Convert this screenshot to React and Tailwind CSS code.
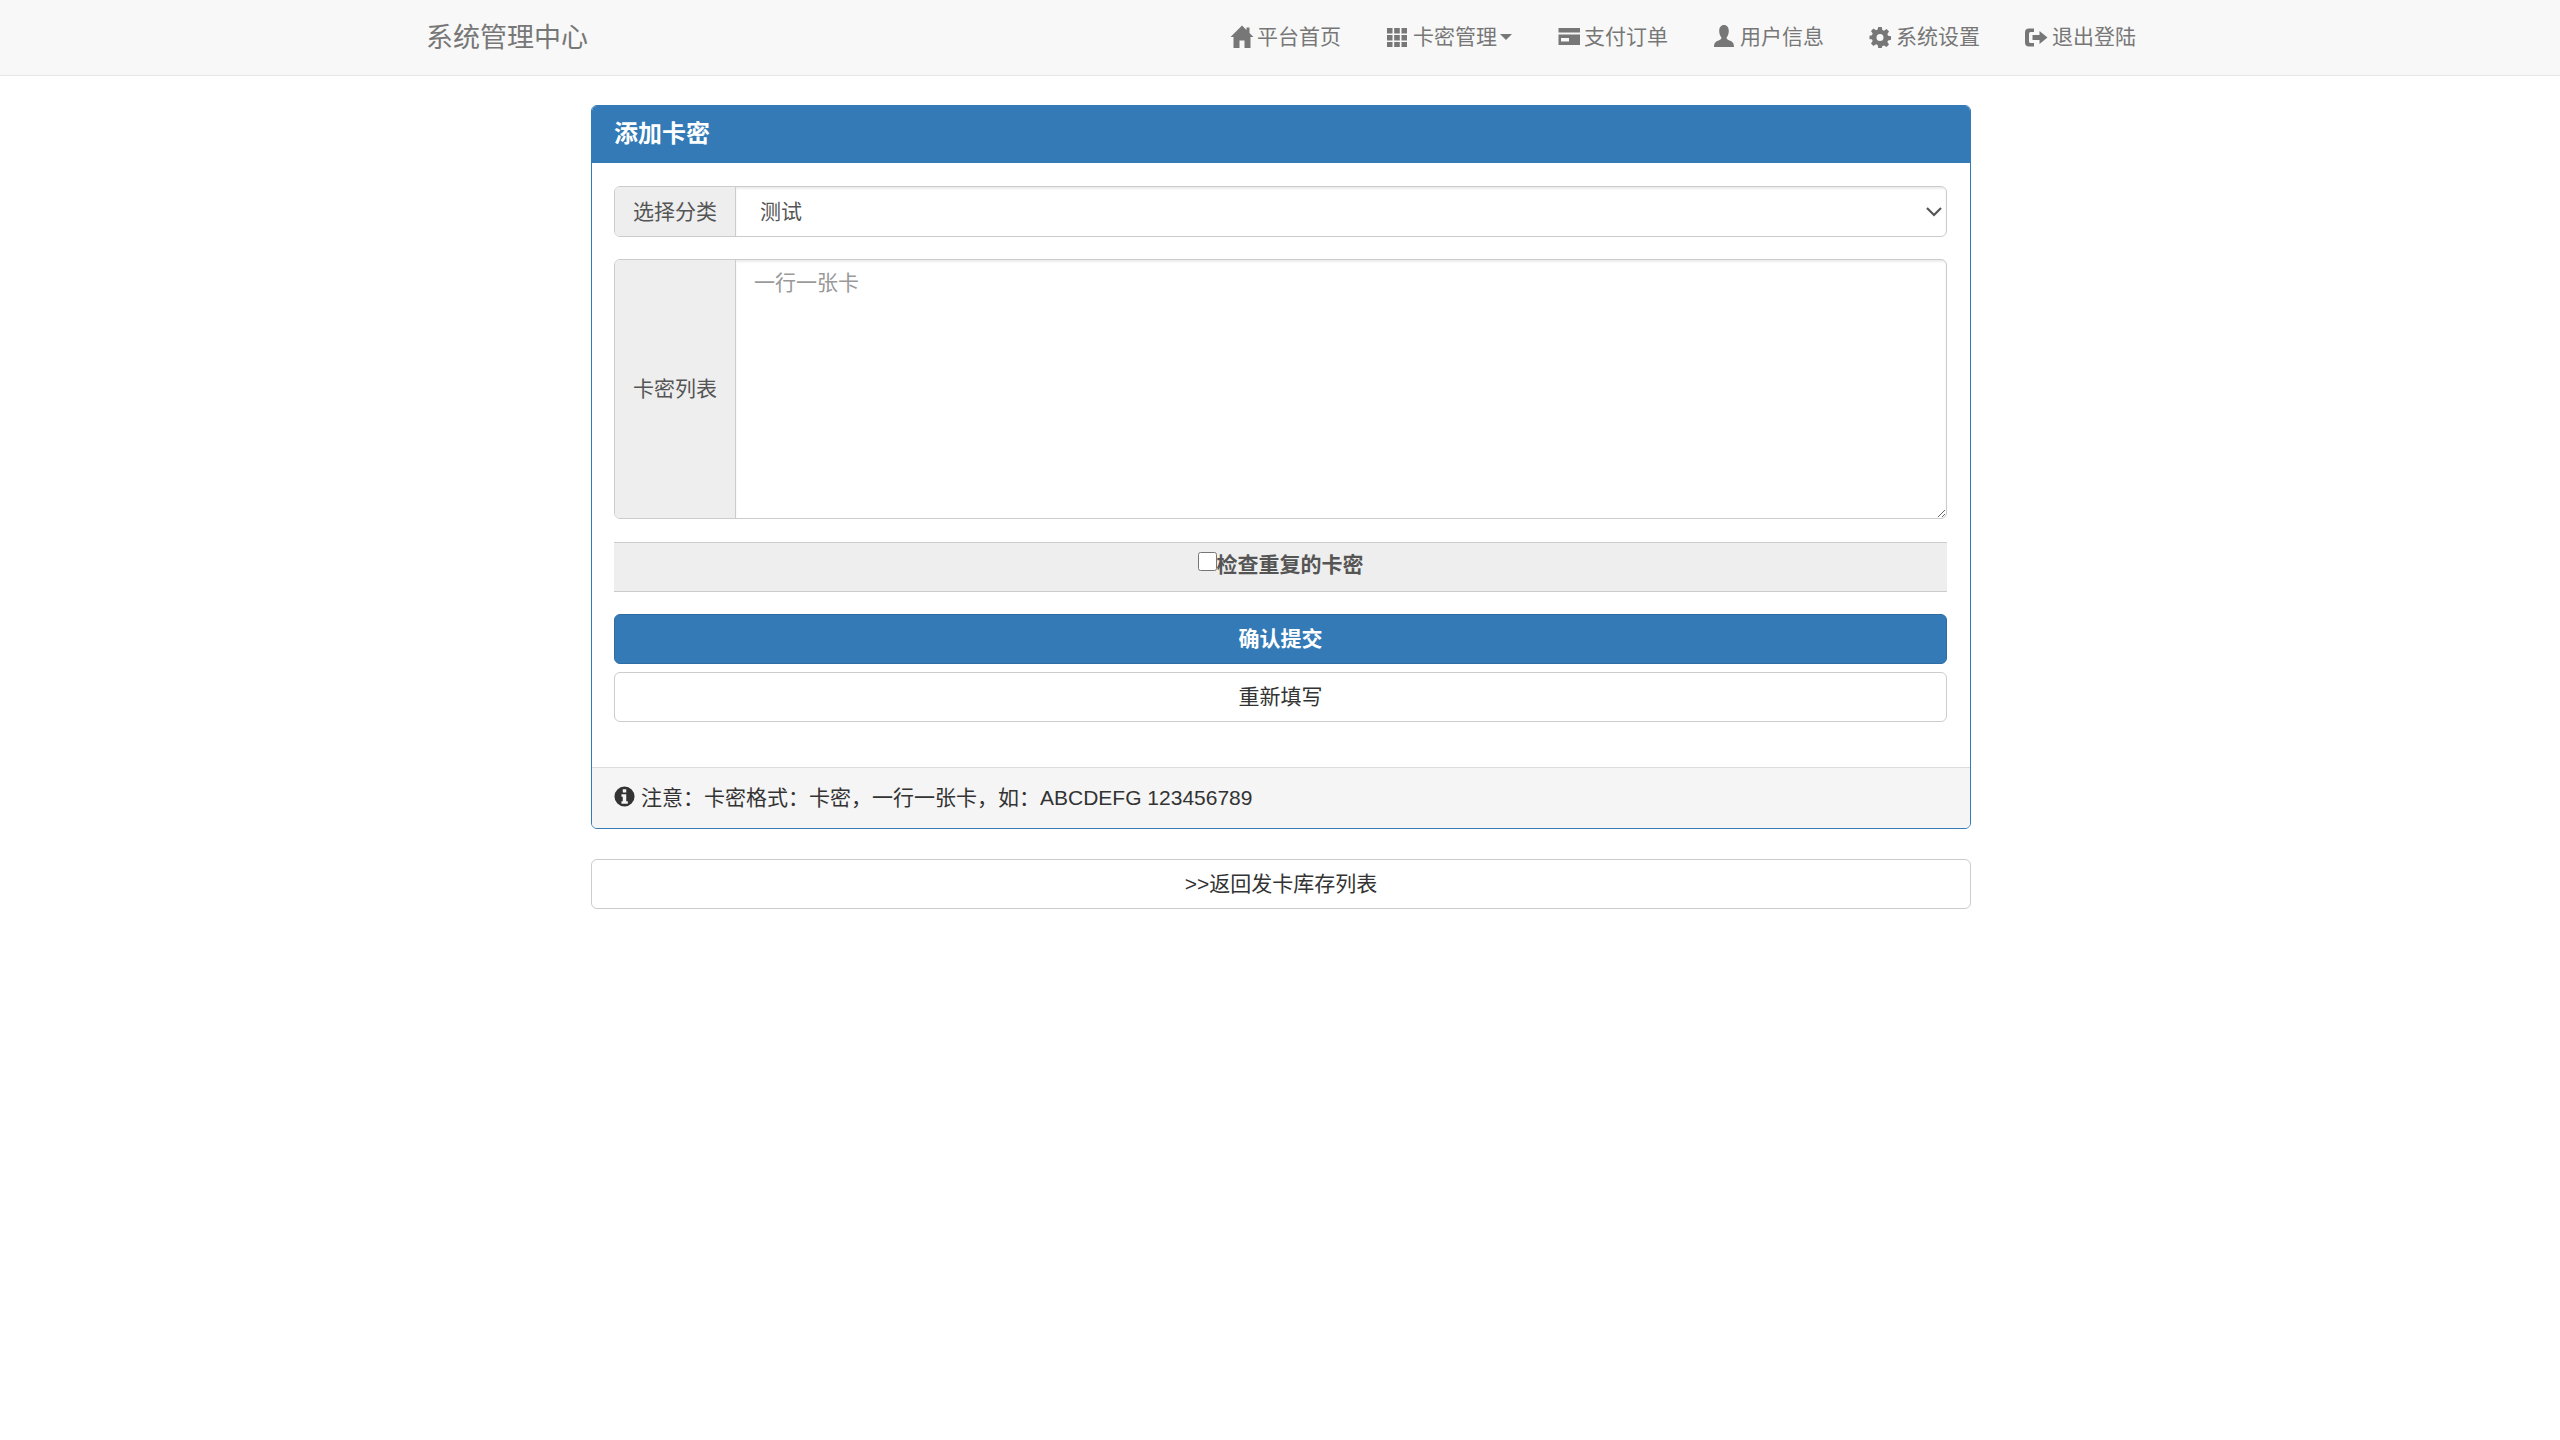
import React from "react";

function Glyph({ children, className = "" }) {
  return (
    <svg viewBox="0 0 24 24" fill="currentColor" className={"w-[24px] h-[24px] shrink-0 " + className}>
      {children}
    </svg>
  );
}

const HomeIcon = () => (
  <Glyph>
    <path d="M12 .5 L.5 12 H3.500 V23 H9.500 V15.500 H14.500 V23 H20.500 V12 H23.500 L19.500 8 V2.500 H16.500 V5 Z" />
  </Glyph>
);

const ThIcon = () => (
  <Glyph className="-ml-[1px] mr-[1px]">
    <path d="M2 3h5.500v5.500H2zM9.200 3h5.600v5.500H9.200zM16.500 3H22v5.500h-5.500zM2 10h5.500v5.500H2zM9.200 10h5.600v5.500H9.200zM16.500 10H22v5.500h-5.500zM2 17h5.500v5H2zM9.200 17h5.600v5H9.200zM16.500 17H22v5h-5.500z" />
  </Glyph>
);

const CardIcon = () => (
  <Glyph>
    <path fillRule="evenodd" d="M1.500 3h21.500v17H1.500zM1.500 7.500v2h21.500v-2zM4 13v3.500h8V13z" />
  </Glyph>
);

const UserIcon = () => (
  <Glyph className="-ml-[1px] mr-[1px]">
    <path d="M12 0c3 0 4.800 2.400 4.800 6 0 3-1 5-2.200 6.400 0 1.400.6 2 2.400 2.800 2.600 1 5 2 5 6.800H2c0-4.800 2.400-5.800 5-6.800 1.800-.8 2.400-1.400 2.400-2.800C8.200 11 7.200 9 7.200 6c0-3.600 1.800-6 4.800-6z" />
  </Glyph>
);

const CogIcon = () => (
  <Glyph className="-ml-[1px] mr-[1px]">
    <path
      transform="translate(1.500 2) scale(.875)"
      fillRule="evenodd"
      d="M10 0h4l.7 3.400 1.900.8 2.900-1.900 2.800 2.800-1.900 2.900.8 1.900 3.400.7v4l-3.400.7-.8 1.900 1.900 2.900-2.800 2.800-2.900-1.900-1.900.8L14 24h-4l-.7-3.400-1.900-.8-2.900 1.900-2.800-2.800 1.900-2.900-.8-1.900L0 14v-4l2.800-.7.8-1.900-1.900-2.900 2.800-2.800 2.900 1.900 1.900-.8zM12 8a4 4 0 1 0 0 8 4 4 0 0 0 0-8z"
    />
  </Glyph>
);

const LogoutIcon = () => (
  <Glyph className="-ml-[1px] mr-[1px]">
    <path d="M10 3.500H5a4 4 0 0 0-4 4v10a4 4 0 0 0 4 4h5v-3.500H6.500A1.500 1.500 0 0 1 5 16.500v-8A1.500 1.500 0 0 1 6.500 7H10z" />
    <path d="M15.500 6l8 6.500-8 6.500v-4H8.500v-5h7z" />
  </Glyph>
);

const InfoIcon = () => (
  <svg viewBox="0 0 24 24" fill="currentColor" className="w-[21px] h-[21px] shrink-0 mb-[2px]">
    <path fillRule="evenodd" d="M12 .500a11.500 11.500 0 1 0 0 23 11.500 11.500 0 0 0 0-23zM10 3.800h4v3.500h-4zM8.500 9.500H14v8h1.800v2.700H8.500v-2.700H10v-5.300H8.500z" />
  </svg>
);

const navItems = [
  { icon: <HomeIcon />, label: "平台首页" },
  { icon: <ThIcon />, label: "卡密管理", caret: true },
  { icon: <CardIcon />, label: "支付订单" },
  { icon: <UserIcon />, label: "用户信息" },
  { icon: <CogIcon />, label: "系统设置" },
  { icon: <LogoutIcon />, label: "退出登陆" },
];

export default function App() {
  return (
    <div className="min-h-[1440px] bg-white text-[21px] text-[#333] font-['Liberation_Sans','Noto_Sans_CJK_SC',sans-serif]">
      <nav className="h-[76px] pl-[3px] bg-[#f8f8f8] border-b border-[#e7e7e7]">
        <div className="w-[1755px] mx-auto px-[22px] h-full flex items-center justify-between">
          <a className="text-[27px] text-[#777] mt-[2px]">系统管理中心</a>
          <ul className="flex gap-[45px] pr-[1px] pb-[2px] text-[#777]">
            {navItems.map((item) => (
              <li key={item.label} className="flex items-center gap-[3px]">
                {item.icon}
                <span className="flex items-center">
                  {item.label}
                  {item.caret && (
                    <span className="ml-[3px] border-x-[6px] border-t-[6px] border-x-transparent border-t-[#777]"></span>
                  )}
                </span>
              </li>
            ))}
          </ul>
        </div>
      </nav>

      <div className="pl-[2px]">
        <div className="w-[1380px] mx-auto mt-[29px]">
          <div className="border border-[#337ab7] rounded-[6px] overflow-hidden">
            <div className="h-[57px] pb-[2px] bg-[#337ab7] text-white font-bold text-[24px] px-[22px] flex items-center">添加卡密</div>
            <div className="pl-[22px] pr-[23px] pt-[23px] pb-[45px]">
              <div className="flex h-[51px] border border-[#ccc] rounded-[6px] overflow-hidden">
                <span className="w-[121px] shrink-0 bg-[#eee] border-r border-[#ccc] text-[#555] flex items-center justify-center">选择分类</span>
                <div className="flex-1 flex items-center justify-between pl-[24px] pr-[4px] text-[#555] shadow-[inset_0_2px_2px_rgba(0,0,0,0.075)]">
                  <span>测试</span>
                  <svg viewBox="0 0 16 16" className="w-[16px] h-[16px]" fill="none" stroke="#555" strokeWidth="2.200">
                    <path d="M1 4l7 7 7-7" />
                  </svg>
                </div>
              </div>

              <div className="flex h-[260px] mt-[22px] border border-[#ccc] rounded-[6px] overflow-hidden">
                <span className="w-[121px] shrink-0 bg-[#eee] border-r border-[#ccc] text-[#555] flex items-center justify-center">卡密列表</span>
                <textarea
                  className="flex-1 px-[18px] pt-[7px] pb-[9px] outline-none text-[#555] placeholder:text-[#999] shadow-[inset_0_2px_2px_rgba(0,0,0,0.075)]"
                  placeholder="一行一张卡"
                ></textarea>
              </div>

              <label className="mt-[23px] h-[50px] pb-[4px] bg-[#eee] border-y border-[#ccc] text-[#555] font-bold flex justify-center items-center">
                <input type="checkbox" className="w-[19px] h-[19px] mb-[7px]" />
                检查重复的卡密
              </label>

              <button className="mt-[22px] w-full h-[50px] pb-[1px] bg-[#337ab7] border border-[#2e6da4] rounded-[6px] text-white font-bold">确认提交</button>
              <button className="mt-[8px] w-full h-[50px] bg-white border border-[#ccc] rounded-[6px] text-[#333]">重新填写</button>
            </div>
            <div className="h-[61px] pb-[1px] bg-[#f5f5f5] border-t border-[#ddd] px-[22px] flex items-center gap-[6px]">
              <InfoIcon />
              <span>注意：卡密格式：卡密，一行一张卡，如：ABCDEFG 123456789</span>
            </div>
          </div>

          <button className="mt-[30px] w-full h-[50px] pb-[1px] bg-white border border-[#ccc] rounded-[6px] text-[#333]">&gt;&gt;返回发卡库存列表</button>
        </div>
      </div>
    </div>
  );
}
